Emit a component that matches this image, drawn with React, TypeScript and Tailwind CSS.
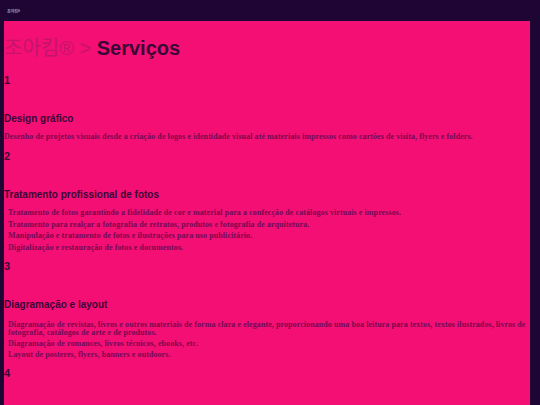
import React from "react";

const sans = "font-['Liberation_Sans','Noto_Sans_CJK_KR',sans-serif]";
const serif = "font-['Liberation_Serif',serif]";

function Num({ n, mt }: { n: string; mt: string }) {
  return <div className={`${sans} ${mt} text-[11px] font-bold leading-[13px] text-[#3a0638]`}>{n}</div>;
}

function Heading({ children }: { children: React.ReactNode }) {
  return <h2 className={`${sans} mt-[25px] text-[10px] font-bold leading-[13px] text-[#3a0638]`}>{children}</h2>;
}

const body = `${serif} text-[8px] font-bold tracking-[0.08px] text-[#760a52]`;

export default function App() {
  return (
    <div className="w-[540px] h-[405px] overflow-hidden bg-[#1f0534] flex flex-col">
      <header className="h-[21px] shrink-0 flex items-center px-[7px]">
        <span className="font-['Noto_Sans_CJK_KR',sans-serif] text-[4px] text-white/80">조아킴®</span>
      </header>
      <main className="ml-[4px] mr-[10px] flex-1 bg-[#f40f74]">
        <h1 className={`${sans} mt-[12px] text-[20px] leading-[28px]`}>
          <span className="font-['Noto_Sans_CJK_KR',sans-serif] font-normal text-[#c4146d]">조아킴</span>
          <span className="font-['Liberation_Sans',sans-serif] font-normal text-[#c4146d]">® &gt; </span>
          <span className="font-bold text-[#3a0638]">Serviços</span>
        </h1>

        <Num n="1" mt="mt-[12px]" />
        <Heading>Design gráfico</Heading>
        <p className={`${body} mt-[6px] leading-[11px]`}>
          Desenho de projetos visuais desde a criação de logos e identidade visual até materiais impressos como cartões de visita, flyers e folders.
        </p>

        <Num n="2" mt="mt-[8px]" />
        <Heading>Tratamento profissional de fotos</Heading>
        <ul className={`${body} mt-[8px] pl-[4px] pr-[2px] leading-[8px] flex flex-col gap-[3.5px]`}>
          <li>Tratamento de fotos garantindo a fidelidade de cor e material para a confecção de catálogos virtuais e impressos.</li>
          <li>Tratamento para realçar a fotografia de retratos, produtos e fotografia de arquitetura.</li>
          <li>Manipulação e tratamento de fotos e ilustrações para uso publicitário.</li>
          <li>Digitalização e restauração de fotos e documentos.</li>
        </ul>

        <Num n="3" mt="mt-[8px]" />
        <Heading>Diagramação e layout</Heading>
        <ul className={`${body} mt-[10px] pl-[4px] pr-[2px] leading-[8px] flex flex-col gap-[3px]`}>
          <li>Diagramação de revistas, livros e outros materiais de forma clara e elegante, proporcionando uma boa leitura para textos, textos ilustrados, livros de fotografia, catálogos de arte e de produtos.</li>
          <li>Diagramação de romances, livros técnicos, ebooks, etc.</li>
          <li>Layout de posteres, flyers, banners e outdoors.</li>
        </ul>

        <Num n="4" mt="mt-[8px]" />
      </main>
    </div>
  );
}
